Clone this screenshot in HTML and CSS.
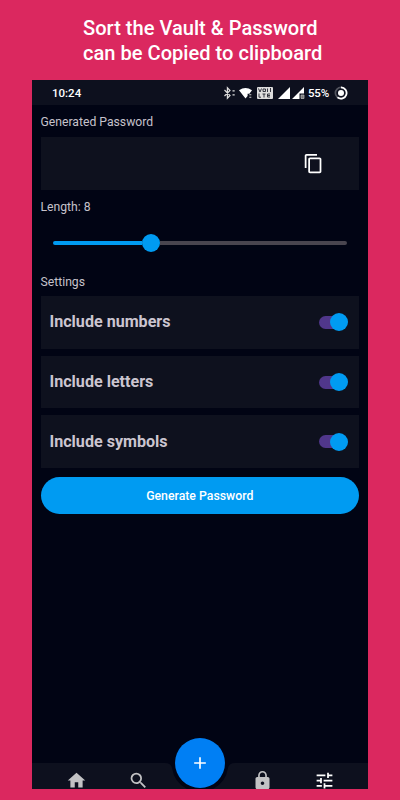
FILE: index.html
```html
<!DOCTYPE html>
<html lang="en">
<head>
    <meta charset="UTF-8">
    <meta name="viewport" content="width=device-width, initial-scale=1.0">
    <title>Password Generator</title>
    <link rel="stylesheet" href="styles.css">
</head>
<body>
<h1 class="headline">Sort the Vault &amp; Password<br>can be Copied to clipboard</h1>
<div class="phone">
    <div class="status-bar">
        <span class="clock">10:24</span>
        <svg class="status-icons" width="84" height="16" viewBox="0 0 84 16">
            <!-- bluetooth -->
            <path d="M1.500 5l5.500 5.500-2.600 2.700V2.800L7 5.500 1.500 11M9.500 5.800h2.200M9.500 9.800h2.200" fill="none" stroke="#ddd" stroke-width="1.200"/>
            <!-- wifi -->
            <path d="M16 5.200q6.500-4.500 13 0l-2.600 3.600h-1.800v2.200l-2.100 2.600z" fill="#fff"/>
            <path d="M26.300 9.800h2M26.300 12.300h2" stroke="#ccc" stroke-width="1.100"/>
            <!-- volte -->
            <rect x="34" y="2" width="16" height="12" rx="1" fill="#ddd"/>
            <path d="M35.500 3.500l1.500 3.500 1.500-3.500M40 4h2.500v2.500H40zM44.500 3.500V7M47.500 3v4M36 8.500v3.700h2M39.500 9h3M41 9v3.500M47 9h-2.500v3H47M44.500 10.500H47" fill="none" stroke="#222530" stroke-width=".9"/>
            <!-- signal -->
            <path d="M55 14L67 2v12z" fill="#fff"/>
            <path d="M69 14L81 2v6.500h-4.500V14z" fill="#fff"/>
            <path d="M78 10h3v3.500h-3z" fill="#777" stroke="#bbb" stroke-width=".7"/>
        </svg>
        <span class="battery">55%</span>
        <svg width="14" height="14" viewBox="0 0 14 14">
            <circle cx="7" cy="7" r="5.600" fill="none" stroke="#53555f" stroke-width="1.700"/>
            <path d="M7 1.400a5.600 5.600 0 1 1-3.500 10" fill="none" stroke="#fff" stroke-width="1.700"/>
            <circle cx="7" cy="7" r="3" fill="#fff"/>
        </svg>
    </div>
    <div class="content">
        <div class="label">Generated Password</div>
        <div class="password-box">
            <svg width="21" height="21" viewBox="0 0 24 24" fill="#fff"><path d="M16 1H4c-1.100 0-2 .9-2 2v14h2V3h12V1zm3 4H8c-1.100 0-2 .9-2 2v14c0 1.100.9 2 2 2h11c1.100 0 2-.9 2-2V7c0-1.100-.9-2-2-2zm0 16H8V7h11v14z"/></svg>
        </div>
        <div class="label label-length">Length: 8</div>
        <div class="slider">
            <div class="slider-fill"></div>
            <div class="slider-thumb"></div>
            <div class="slider-rest"></div>
        </div>
        <div class="label label-settings">Settings</div>
        <div class="options">
            <div class="option"><span>Include numbers</span><div class="toggle"></div></div>
            <div class="option"><span>Include letters</span><div class="toggle"></div></div>
            <div class="option"><span>Include symbols</span><div class="toggle"></div></div>
        </div>
        <button class="generate">Generate Password</button>
    </div>
    <div class="nav">
        <svg class="nav-bg" width="336" height="26" viewBox="0 0 336 26">
            <path d="M0 0H133Q139 0 140 5A28.500 28.500 0 0 0 155 26H0zM336 0H203Q197 0 196 5A28.500 28.500 0 0 1 181 26H336z" fill="#0d101e"/>
        </svg>
        <div class="nav-items">
            <svg class="muted" viewBox="0 0 24 24"><path d="M10 20v-6h4v6h5v-8h3L12 3 2 12h3v8z"/></svg>
            <svg class="muted" viewBox="0 0 24 24"><path d="M15.500 14h-.79l-.28-.27A6.471 6.471 0 0 0 16 9.500 6.500 6.500 0 1 0 9.500 16c1.610 0 3.090-.59 4.230-1.570l.27.28v.79l5 4.990L20.490 19l-4.990-5zm-6 0C7.010 14 5 11.990 5 9.500S7.010 5 9.500 5 14 7.010 14 9.500 11.990 14 9.500 14z"/></svg>
            <div class="nav-gap"></div>
            <svg class="muted" viewBox="0 0 24 24"><path d="M18 8h-1V6c0-2.760-2.240-5-5-5S7 3.240 7 6v2H6c-1.100 0-2 .9-2 2v10c0 1.100.9 2 2 2h12c1.100 0 2-.9 2-2V10c0-1.100-.9-2-2-2zm-6 9c-1.100 0-2-.9-2-2s.9-2 2-2 2 .9 2 2-.9 2-2 2zm3.100-9H8.900V6c0-1.710 1.390-3.100 3.100-3.100 1.710 0 3.100 1.390 3.100 3.100v2z"/></svg>
            <svg viewBox="0 0 24 24"><path d="M3 17v2h6v-2H3zM3 5v2h10V5H3zm10 16v-2h8v-2h-8v-2h-2v6h2zM7 9v2H3v2h4v2h2V9H7zm14 4v-2H11v2h10zm-6-4h2V7h4V5h-4V3h-2v6z"/></svg>
        </div>
        <div class="fab">
            <svg width="20" height="20" viewBox="0 0 24 24" fill="#fff"><path d="M19 13h-6v6h-2v-6H5v-2h6V5h2v6h6v2z"/></svg>
        </div>
    </div>
</div>
</body>
</html>
```

FILE: styles.css
```css
* {
    box-sizing: border-box;
}
body {
    margin: 0;
    height: 800px;
    padding-top: 16px;
    background-color: #db285f;
    font-family: Roboto, "Liberation Sans", sans-serif;
    overflow: hidden;
}
.headline {
    margin: 0 0 14px 83px;
    height: 50px;
    font-size: 20.1px;
    line-height: 25px;
    font-weight: 500;
    color: #fff;
    white-space: nowrap;
}
.phone {
    display: flex;
    flex-direction: column;
    width: 336px;
    height: 709px;
    margin: 0 auto;
    background-color: #010414;
    overflow: hidden;
}
.status-bar {
    display: flex;
    align-items: center;
    height: 25px;
    padding: 0 20px;
    background-color: #0d101e;
    color: #fff;
    font-size: 11.5px;
    font-weight: 500;
}
.clock {
    flex: 1;
}
.status-icons {
    margin-right: 1px;
}
.battery {
    width: 22px;
    margin-right: 4px;
    font-size: 11.5px;
    letter-spacing: -0.2px;
}
.content {
    flex: 1;
    padding: 9px 9px 0 8.5px;
}
.label {
    height: 16px;
    line-height: 16px;
    font-size: 12.2px;
    color: #c6c2cb;
}
.password-box {
    display: flex;
    align-items: center;
    justify-content: flex-end;
    height: 53px;
    margin-top: 7px;
    padding-right: 35px;
    background-color: #0e111e;
}
.label-length {
    margin-top: 9px;
}
.slider {
    display: flex;
    align-items: center;
    height: 18px;
    margin: 19px 12px 0;
}
.slider-fill {
    width: 89.5px;
    height: 4px;
    border-radius: 2px 0 0 2px;
    background-color: #009bf2;
}
.slider-thumb {
    width: 18px;
    height: 18px;
    border-radius: 50%;
    background-color: #009bf2;
}
.slider-rest {
    flex: 1;
    height: 4px;
    border-radius: 0 2px 2px 0;
    background-color: #49454f;
}
.label-settings {
    margin-top: 22px;
}
.options {
    display: flex;
    flex-direction: column;
    gap: 7px;
    margin-top: 6px;
}
.option {
    display: flex;
    align-items: center;
    justify-content: space-between;
    height: 52.7px;
    padding: 0 11.5px 0 9px;
    background-color: #0e111e;
    color: #cbc5d0;
    font-size: 16.1px;
    font-weight: 700;
}
.option span {
    padding-bottom: 1px;
}
.toggle {
    display: flex;
    align-items: center;
    justify-content: flex-end;
    width: 26px;
    height: 13px;
    margin-right: 3px;
    border-radius: 7px;
    background-color: #50378b;
}
.toggle::after {
    content: "";
    flex: none;
    width: 18px;
    height: 18px;
    margin-right: -3px;
    border-radius: 50%;
    background-color: #009bf2;
}
.generate {
    display: block;
    width: 100%;
    height: 37px;
    margin-top: 9px;
    padding: 0;
    border: none;
    border-radius: 19px;
    background-color: #009bf2;
    color: #fff;
    font-family: inherit;
    font-size: 12.3px;
    font-weight: 500;
}
.nav {
    position: relative;
    height: 26px;
}
.nav-bg {
    position: absolute;
    top: 0;
    left: 0;
}
.nav-items {
    position: relative;
    display: flex;
    justify-content: space-around;
    padding: 7px 13px 0 14px;
}
.nav-items svg {
    width: 21px;
    height: 21px;
    fill: #fff;
}
.nav-items .muted {
    fill: #c2c2c4;
}
.nav-gap {
    width: 21px;
}
.fab {
    position: absolute;
    top: -25px;
    left: 143px;
    display: flex;
    align-items: center;
    justify-content: center;
    width: 50px;
    height: 50px;
    border-radius: 50%;
    background-color: #007ff4;
}
```
